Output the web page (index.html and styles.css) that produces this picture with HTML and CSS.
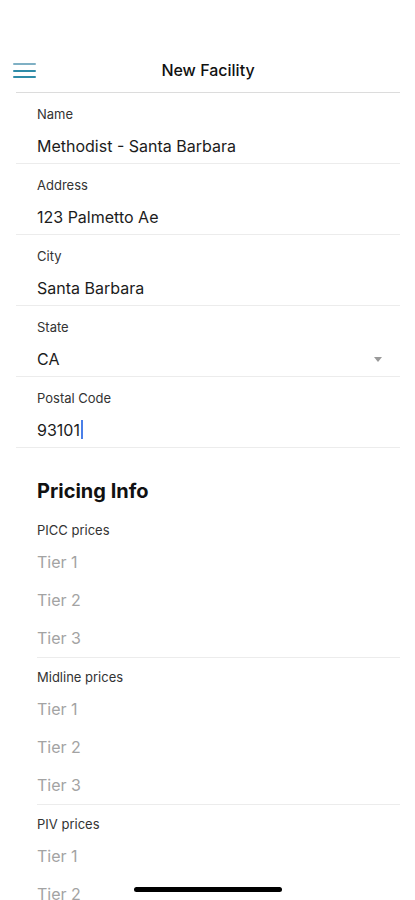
FILE: index.html
```html
<!DOCTYPE html>
<html lang="en">

<head>
    <meta charset="UTF-8">
    <meta name="viewport" content="width=device-width, initial-scale=1.0">
    <title>New Facility</title>
    <link rel="stylesheet" href="styles.css">
</head>

<body>
    <div class="app">
        <div class="status-bar"></div>

        <div class="header">
            <button class="menu-button">
                <span></span>
                <span></span>
                <span></span>
            </button>
            <div class="header-title">New Facility</div>
        </div>

        <div class="form">
            <div class="form-row">
                <div class="form-label">Name</div>
                <div class="form-value">Methodist - Santa Barbara</div>
            </div>
            <div class="form-row">
                <div class="form-label">Address</div>
                <div class="form-value">123 Palmetto Ae</div>
            </div>
            <div class="form-row">
                <div class="form-label">City</div>
                <div class="form-value">Santa Barbara</div>
            </div>
            <div class="form-row">
                <div class="form-label">State</div>
                <div class="form-value select-value">
                    <span>CA</span>
                    <span class="caret"></span>
                </div>
            </div>
            <div class="form-row">
                <div class="form-label">Postal Code</div>
                <div class="form-value">93101<span class="cursor"></span></div>
            </div>
        </div>

        <div class="pricing">
            <h2 class="pricing-title">Pricing Info</h2>

            <div class="price-group">
                <div class="form-label">PICC prices</div>
                <div class="tier">Tier 1</div>
                <div class="tier">Tier 2</div>
                <div class="tier">Tier 3</div>
            </div>

            <div class="price-group">
                <div class="form-label">Midline prices</div>
                <div class="tier">Tier 1</div>
                <div class="tier">Tier 2</div>
                <div class="tier">Tier 3</div>
            </div>

            <div class="price-group">
                <div class="form-label">PIV prices</div>
                <div class="tier">Tier 1</div>
                <div class="tier">Tier 2</div>
            </div>
        </div>

        <div class="home-indicator"></div>
    </div>
</body>

</html>
```

FILE: styles.css
```css
body {
    margin: 0;
    background-color: #ffffff;
    font-family: Inter, "Noto Sans", sans-serif;
    color: #1c1c1e;
}

.app {
    width: 415px;
    height: 900px;
    overflow: hidden;
}

.status-bar {
    height: 48px;
}

.header {
    position: relative;
    height: 44px;
    margin: 0 15px 0 16px;
    border-bottom: 1px solid #dcdcdc;
    display: flex;
    align-items: center;
    justify-content: center;
}

.menu-button {
    position: absolute;
    left: -3px;
    top: 15px;
    display: flex;
    flex-direction: column;
    gap: 4.5px;
    padding: 0;
    border: none;
    background: none;
}

.menu-button span {
    display: block;
    width: 23px;
    height: 2px;
    background-color: #2f8ca8;
    border-radius: 1px;
}

.menu-button span:first-child {
    background-color: #7fb0c4;
}

.header-title {
    font-size: 16px;
    font-weight: 500;
    color: #111111;
}

.form {
    margin: 0 15px 0 16px;
}

.form-row {
    padding: 12px 0 6px 21px;
    border-bottom: 1px solid #ececec;
}

.form-label {
    font-size: 13px;
    line-height: 18px;
    color: #333333;
}

.form-value {
    margin-top: 12px;
    font-size: 16px;
    line-height: 22px;
    color: #1c1c1c;
}

.select-value {
    display: flex;
    justify-content: space-between;
    align-items: center;
}

.caret {
    width: 0;
    height: 0;
    margin-right: 18px;
    border-left: 4.5px solid transparent;
    border-right: 4.5px solid transparent;
    border-top: 5px solid #9a9a9a;
}

.cursor {
    display: inline-block;
    width: 2px;
    height: 19px;
    margin-left: 1px;
    vertical-align: -3px;
    background-color: #4a7fe8;
}

.pricing {
    margin: 0 15px 0 37px;
}

.pricing-title {
    margin: 29px 0 16px;
    font-size: 20px;
    line-height: 28px;
    font-weight: 700;
    color: #111111;
}

.price-group {
    border-bottom: 1px solid #ececec;
}

.price-group + .price-group {
    padding-top: 10px;
}

.price-group .form-label {
    margin-bottom: 4px;
}

.tier {
    font-size: 16px;
    line-height: 38px;
    color: #a3a3a3;
}

.home-indicator {
    position: fixed;
    left: 134px;
    top: 887px;
    width: 148px;
    height: 5px;
    border-radius: 3px;
    background-color: #000000;
}
```
